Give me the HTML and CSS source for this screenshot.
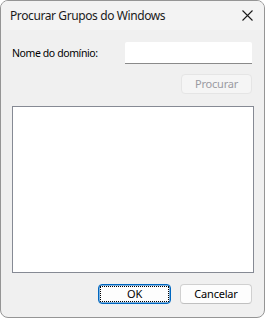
FILE: index.html
```html
<!DOCTYPE html>
<html lang="pt">
<head>
<meta charset="utf-8">
<title>Procurar Grupos do Windows</title>
<link rel="stylesheet" href="styles.css">
</head>
<body>
<div class="window">
  <div class="titlebar">
    <span class="title">Procurar Grupos do Windows</span>
    <span class="close">
      <svg width="11" height="11" viewBox="0 0 11 11"><path d="M0.5 0.5 L10.5 10.5 M10.5 0.5 L0.5 10.5" stroke="#1b1b1b" stroke-width="1.1" fill="none"/></svg>
    </span>
  </div>
  <div class="content">
    <div class="row">
      <label class="label">Nome do domínio:</label>
      <div class="input"></div>
    </div>
    <div class="row-end">
      <button class="btn disabled">Procurar</button>
    </div>
    <div class="list"></div>
    <div class="footer">
      <button class="btn default"><span class="focus">OK</span></button>
      <button class="btn">Cancelar</button>
    </div>
  </div>
</div>
</body>
</html>
```
FILE: styles.css
```css
html, body {
  margin: 0;
  padding: 0;
  background: #ffffff;
}
body {
  font-family: "Noto Sans", "Open Sans", sans-serif;
  font-size: 11px;
  color: #000;
}
.window {
  width: 265px;
  height: 318px;
  box-sizing: border-box;
  border: 1px solid #959595;
  border-radius: 8px;
  overflow: hidden;
  background: #f0f0f0;
  display: flex;
  flex-direction: column;
}
.titlebar {
  height: 29px;
  background: #f3f3f3;
  display: flex;
  align-items: center;
  justify-content: space-between;
  padding: 0 11px 0 9px;
  flex-shrink: 0;
}
.title {
  font-size: 12px;
  letter-spacing: -0.4px;
  color: #1a1a1a;
}
.close {
  display: flex;
  width: 11px;
  height: 11px;
}
.content {
  flex: 1;
  display: flex;
  flex-direction: column;
  padding: 12px 10px 0 11px;
}
.row {
  display: flex;
  align-items: center;
  justify-content: space-between;
  height: 22px;
  margin-right: 2px;
}
.label {
  font-size: 10.5px;
  letter-spacing: -0.4px;
  color: #000;
}
.input {
  width: 127px;
  height: 22px;
  box-sizing: border-box;
  background: #fff;
  border-bottom: 1px solid #8a8a8a;
  border-radius: 2px 2px 0 0;
}
.row-end {
  display: flex;
  justify-content: flex-end;
  margin-top: 10px;
  margin-right: 2px;
}
.btn {
  font-family: "Noto Sans", "Open Sans", sans-serif;
  font-size: 11px;
  letter-spacing: -0.2px;
  height: 20px;
  box-sizing: border-box;
  background: #fdfdfd;
  border: 1px solid #d0d0d0;
  border-bottom-color: #c0c0c0;
  border-radius: 4px;
  padding: 0;
  color: #000;
  display: flex;
  align-items: center;
  justify-content: center;
  line-height: 16px;
}
.btn.disabled {
  width: 71px;
  background: #f5f5f5;
  border: 1px solid #e5e5e5;
  color: #9a9aa2;
}
.list {
  margin-top: 12px;
  height: 167px;
  box-sizing: border-box;
  background: #fff;
  border: 1px solid #868a94;
}
.footer {
  display: flex;
  justify-content: flex-end;
  gap: 9px;
  margin-top: 11px;
  margin-right: 2px;
}
.footer .btn {
  width: 72px;
}
.btn.default {
  width: 73px;
  border: 1px solid #0067c0;
  box-shadow: inset 0 0 0 0.5px #0067c0;
  padding: 1px;
}
.focus {
  flex: 1;
  align-self: stretch;
  display: flex;
  align-items: center;
  justify-content: center;
  border: 1px dotted #000;
}
```
